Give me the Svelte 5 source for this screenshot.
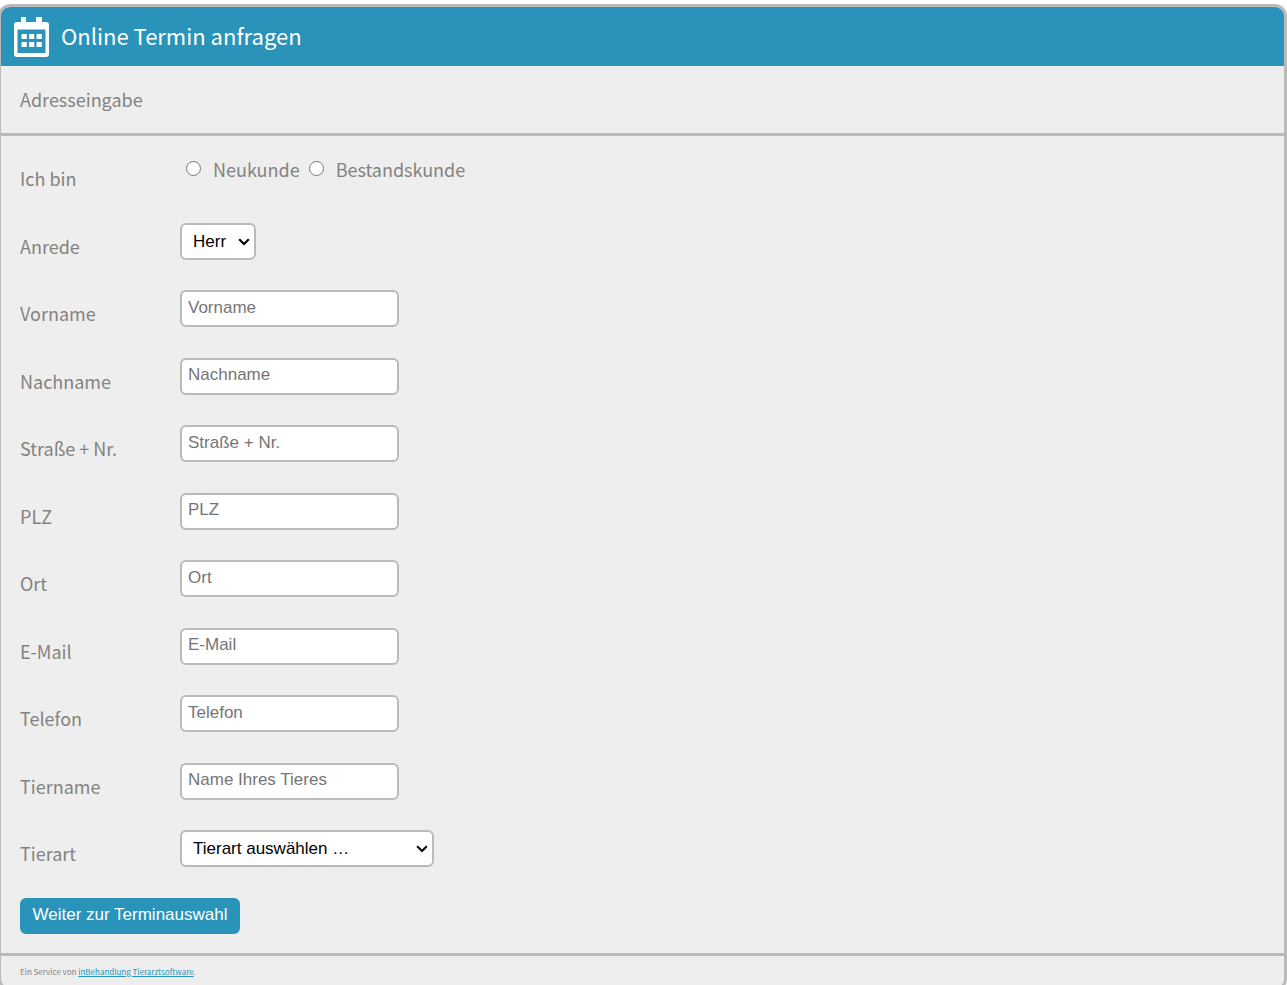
<script lang="ts">
  const fields = [
    { id: 'vorname', label: 'Vorname', placeholder: 'Vorname', type: 'text' },
    { id: 'nachname', label: 'Nachname', placeholder: 'Nachname', type: 'text' },
    { id: 'strasse', label: 'Straße + Nr.', placeholder: 'Straße + Nr.', type: 'text' },
    { id: 'plz', label: 'PLZ', placeholder: 'PLZ', type: 'text' },
    { id: 'ort', label: 'Ort', placeholder: 'Ort', type: 'text' },
    { id: 'email', label: 'E-Mail', placeholder: 'E-Mail', type: 'email' },
    { id: 'telefon', label: 'Telefon', placeholder: 'Telefon', type: 'tel' },
    { id: 'tiername', label: 'Tiername', placeholder: 'Name Ihres Tieres', type: 'text' }
  ];
</script>

{#snippet chevron()}
  <svg class="chevron" viewBox="0 0 12 8" aria-hidden="true">
    <path d="M1.2 1.2 6 6l4.8-4.8" fill="none" stroke="#000" stroke-width="2.1" />
  </svg>
{/snippet}

<main class="box">
  <header>
    <svg class="calendar" viewBox="0 0 35 40" aria-hidden="true">
      <path
        fill="#fff"
        fill-rule="evenodd"
        d="M7 0h5v5h10V0h6v5h4a3 3 0 0 1 3 3v29a3 3 0 0 1-3 3H3a3 3 0 0 1-3-3V8a3 3 0 0 1 3-3h4zM3.5 12.5v23.5h28V12.5z"
      />
      {#each [17, 25] as y}
        {#each [7.5, 15, 22.5] as x}
          <rect {x} {y} width="5.3" height="5" rx="0.5" fill="#fff" />
        {/each}
      {/each}
    </svg>
    <h1>Online Termin anfragen</h1>
  </header>

  <h2>Adresseingabe</h2>

  <form>
    <div class="row" role="radiogroup" aria-labelledby="kunde">
      <span class="name" id="kunde">Ich bin</span>
      <div class="choices">
        <input type="radio" id="neukunde" name="kunde" value="neu" />
        <label for="neukunde">Neukunde</label>
        <input type="radio" id="bestandskunde" name="kunde" value="bestand" />
        <label for="bestandskunde">Bestandskunde</label>
      </div>
    </div>

    <div class="row">
      <label class="name" for="anrede">Anrede</label>
      <div class="select">
        <select id="anrede">
          <option>Herr</option>
          <option>Frau</option>
        </select>
        {@render chevron()}
      </div>
    </div>

    {#each fields as field}
      <div class="row">
        <label class="name" for={field.id}>{field.label}</label>
        <input class="text" id={field.id} type={field.type} placeholder={field.placeholder} />
      </div>
    {/each}

    <div class="row">
      <label class="name" for="tierart">Tierart</label>
      <div class="select">
        <select id="tierart" class="wide">
          <option>Tierart auswählen …</option>
          <option>Hund</option>
          <option>Katze</option>
        </select>
        {@render chevron()}
      </div>
    </div>

    <button type="button">Weiter zur Terminauswahl</button>
  </form>

  <footer>Ein Service von <a href="#tierarztsoftware">inBehandlung Tierarztsoftware</a>.</footer>
</main>

<style>
  :global(body) {
    background: #fff;
    overflow-x: hidden;
  }
  .box {
    margin: 4px 0 0 -2px;
    border: 3px solid #bababa;
    border-radius: 12px;
    overflow: hidden;
    background: #eee;
    color: #848280;
    font-family: 'Noto Sans CJK SC', 'Noto Sans', sans-serif;
    font-size: 18px;
  }
  header {
    display: flex;
    align-items: center;
    gap: 12px;
    height: 59px;
    padding: 0 13px;
    background: #2993ba;
    color: #fff;
  }
  .calendar {
    width: 35px;
    height: 40px;
  }
  h1,
  h2 {
    margin: 0;
    font-weight: 400;
  }
  h1 {
    padding-bottom: 4px;
    font-size: 22px;
    line-height: 32px;
  }
  h2 {
    padding: 20px 19px;
    border-bottom: 3px solid #bababa;
    font-size: 18px;
    line-height: 27px;
  }
  form {
    padding: 19px;
    border-bottom: 3px solid #bababa;
  }
  .row {
    display: flex;
    align-items: flex-start;
  }
  .name {
    flex: none;
    width: 160px;
    padding: 8px 0 28px;
    line-height: 1.75;
  }
  .choices {
    display: flex;
    align-items: center;
    line-height: 28px;
  }
  .choices input {
    width: 15px;
    height: 15px;
    margin: 0 12px 2px 6px;
  }
  .choices label {
    margin-right: 3px;
  }
  .text,
  select,
  button {
    box-sizing: border-box;
    height: 37px;
    border: 2px solid #bababa;
    border-radius: 6px;
    font-family: 'Liberation Sans', Arial, sans-serif;
    font-size: 17px;
  }
  .text {
    width: 219px;
    padding: 0 6px 2px;
    background: #fff;
  }
  .text::placeholder {
    color: #757575;
  }
  .select {
    position: relative;
  }
  select {
    display: block;
    width: 76px;
    padding: 0 20px 0 11px;
    appearance: none;
    background: #fff;
    color: #000;
  }
  .wide {
    width: 254px;
  }
  .chevron {
    position: absolute;
    top: 15px;
    right: 6px;
    width: 12px;
    height: 8px;
    pointer-events: none;
  }
  button {
    display: block;
    width: 220px;
    height: 36px;
    padding: 0 0 1px;
    border-color: #2993ba;
    background: #2993ba;
    color: #fff;
    white-space: nowrap;
  }
  footer {
    padding: 8px 19px;
    font-size: 8px;
    line-height: 16px;
  }
  a {
    color: #2993ba;
  }
</style>
